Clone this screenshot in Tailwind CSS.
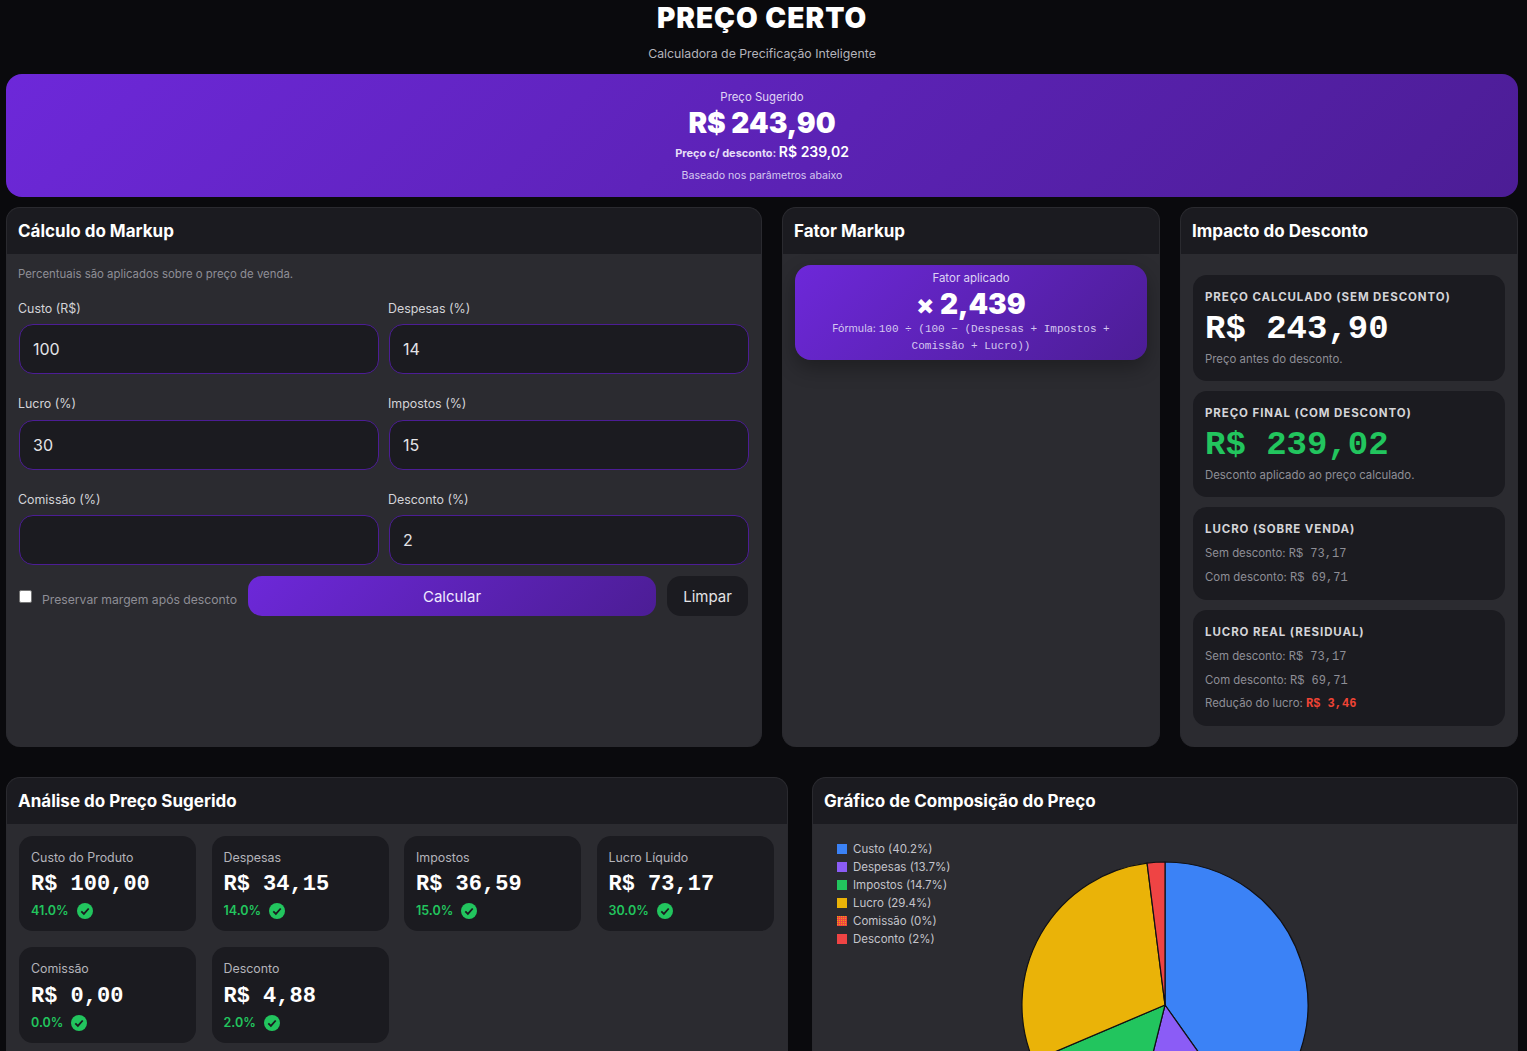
<!DOCTYPE html>
<html lang="pt-BR">
<head>
<meta charset="utf-8">
<title>Preço Certo</title>
<script src="https://cdn.jsdelivr.net/npm/@tailwindcss/browser@4"></script>
</head>
<body class="m-0 h-[1051px] overflow-hidden bg-[#0a0a0d] font-['Inter',sans-serif] text-white">
<div class="w-[1512px] ml-[6px]">
  <header class="h-[74px] text-center">
    <h1 class="m-0 pt-[1px] text-[28px] leading-[34px] font-black tracking-[1px] text-white">PREÇO CERTO</h1>
    <p class="mt-[10px] text-[12.3px] leading-[18px] text-[#b4b4bb]">Calculadora de Precificação Inteligente</p>
  </header>

  <section class="h-[123px] rounded-[16px] bg-[linear-gradient(135deg,#6d28d9,#4c1d95)] pt-[15px] text-center">
    <div class="text-[11.4px] leading-[16px] text-[#e0d6f5]">Preço Sugerido</div>
    <div class="text-[28px] leading-[34px] font-black mt-[1px]">R$ 243,90</div>
    <div class="text-[11px] leading-[18px] font-bold text-[#e6def7] mt-[3px]">Preço c/ desconto: <span class="text-[14px] font-semibold text-white">R$ 239,02</span></div>
    <div class="text-[10.6px] leading-[14px] text-[#d5c8f0] mt-[7px]">Baseado nos parâmetros abaixo</div>
  </section>

  <div class="grid grid-cols-[756px_378px_338px] gap-[20px] mt-[10px]">
    <section class="h-[540px] rounded-[14px] overflow-hidden bg-[#2b2b30] border-t border-x border-[#2a2a2f]">
      <div class="h-[46px] bg-[#1b1b20] px-[11px] pt-[1px] flex items-center"><h2 class="text-[17px] font-bold">Cálculo do Markup</h2></div>
      <div class="px-[11px] pt-[13px]">
        <p class="text-[11.4px] leading-[14px] text-[#8e8e96]">Percentuais são aplicados sobre o preço de venda.</p>
        <div class="grid grid-cols-[360px_360px] gap-x-[10px] mt-[20px]">
          <label class="block h-[95px]"><span class="block text-[12.4px] leading-[16px] text-[#d4d4d8] mb-[7px]">Custo (R$)</span><input value="100" class="ml-px w-[360px] h-[50px] rounded-[14px] border border-[#4c1d95] bg-[#1b1b20] px-[13px] text-[16px] text-[#e4e4e7] outline-none"></label>
          <label class="block h-[95px]"><span class="block text-[12.4px] leading-[16px] text-[#d4d4d8] mb-[7px]">Despesas (%)</span><input value="14" class="ml-px w-[360px] h-[50px] rounded-[14px] border border-[#4c1d95] bg-[#1b1b20] px-[13px] text-[16px] text-[#e4e4e7] outline-none"></label>
          <label class="block h-[96px]"><span class="block text-[12.4px] leading-[16px] text-[#d4d4d8] mb-[8px]">Lucro (%)</span><input value="30" class="ml-px w-[360px] h-[50px] rounded-[14px] border border-[#4c1d95] bg-[#1b1b20] px-[13px] text-[16px] text-[#e4e4e7] outline-none"></label>
          <label class="block h-[96px]"><span class="block text-[12.4px] leading-[16px] text-[#d4d4d8] mb-[8px]">Impostos (%)</span><input value="15" class="ml-px w-[360px] h-[50px] rounded-[14px] border border-[#4c1d95] bg-[#1b1b20] px-[13px] text-[16px] text-[#e4e4e7] outline-none"></label>
          <label class="block h-[84px]"><span class="block text-[12.4px] leading-[16px] text-[#d4d4d8] mb-[7px]">Comissão (%)</span><input value="" class="ml-px w-[360px] h-[50px] rounded-[14px] border border-[#4c1d95] bg-[#1b1b20] px-[13px] text-[16px] text-[#e4e4e7] outline-none"></label>
          <label class="block h-[84px]"><span class="block text-[12.4px] leading-[16px] text-[#d4d4d8] mb-[7px]">Desconto (%)</span><input value="2" class="ml-px w-[360px] h-[50px] rounded-[14px] border border-[#4c1d95] bg-[#1b1b20] px-[13px] text-[16px] text-[#e4e4e7] outline-none"></label>
        </div>
        <div class="flex items-center h-[40px]">
          <span class="ml-[1px] w-[13px] h-[13px] rounded-[2px] bg-white border border-[#767676] mt-[1px]"></span>
          <span class="ml-[10px] w-[206px] text-[12.2px] text-[#8e8e96] mt-[8px]">Preservar margem após desconto</span>
          <button class="w-[408px] h-[40px] rounded-[14px] bg-[linear-gradient(135deg,#6d28d9,#4c1d95)] pt-[2px] text-[15px] text-[#f0eaff]">Calcular</button>
          <button class="ml-[11px] w-[81px] h-[40px] rounded-[14px] bg-[#1b1b20] pt-[2px] text-[15px] text-[#e4e4e7]">Limpar</button>
        </div>
      </div>
    </section>

    <section class="h-[540px] rounded-[14px] overflow-hidden bg-[#2b2b30] border-t border-x border-[#2a2a2f]">
      <div class="h-[46px] bg-[#1b1b20] px-[11px] pt-[1px] flex items-center"><h2 class="text-[17px] font-bold">Fator Markup</h2></div>
      <div class="px-[12px] pt-[11px]">
        <div class="h-[95px] rounded-[16px] bg-[linear-gradient(135deg,#6d28d9,#4c1d95)] shadow-[0_8px_20px_rgba(0,0,0,0.3)] text-center pt-[5px] px-[30px]">
          <div class="text-[11.5px] leading-[16px] text-[#ddd2f4]">Fator aplicado</div>
          <div class="text-[28px] leading-[34px] font-black mt-[1px]"><span class="text-[26px]">×</span> 2,439</div>
          <div class="text-[10.6px] leading-[16.5px] text-[#d5c8f0] -mt-[1px]">Fórmula: <span class="font-['Liberation_Mono',monospace] text-[11px]">100 ÷ (100 − (Despesas + Impostos + Comissão + Lucro))</span></div>
        </div>
      </div>
    </section>

    <section class="h-[540px] rounded-[14px] overflow-hidden bg-[#2b2b30] border-t border-x border-[#2a2a2f]">
      <div class="h-[46px] bg-[#1b1b20] px-[11px] pt-[1px] flex items-center"><h2 class="text-[17px] font-bold">Impacto do Desconto</h2></div>
      <div class="px-[12px] pt-[21px] flex flex-col gap-[10px]">
        <div class="h-[106px] rounded-[14px] bg-[#1b1b20] px-[12px] pt-[14px]">
          <div class="text-[11.5px] leading-[16px] font-bold tracking-[0.9px] text-[#d4d4d8]">PREÇO CALCULADO (SEM DESCONTO)</div>
          <div class="font-['Liberation_Mono',monospace] text-[34px] leading-[38px] font-bold mt-[5px]">R$ 243,90</div>
          <div class="text-[11.4px] leading-[16px] text-[#8e8e96] mt-[3px]">Preço antes do desconto.</div>
        </div>
        <div class="h-[106px] rounded-[14px] bg-[#1b1b20] px-[12px] pt-[14px]">
          <div class="text-[11.5px] leading-[16px] font-bold tracking-[0.9px] text-[#d4d4d8]">PREÇO FINAL (COM DESCONTO)</div>
          <div class="font-['Liberation_Mono',monospace] text-[34px] leading-[38px] font-bold text-[#22c55e] mt-[5px]">R$ 239,02</div>
          <div class="text-[11.4px] leading-[16px] text-[#8e8e96] mt-[3px]">Desconto aplicado ao preço calculado.</div>
        </div>
        <div class="h-[93px] rounded-[14px] bg-[#1b1b20] px-[12px] pt-[14px]">
          <div class="text-[11.5px] leading-[16px] font-bold tracking-[0.9px] text-[#d4d4d8]">LUCRO (SOBRE VENDA)</div>
          <div class="text-[11.4px] leading-[16px] text-[#8e8e96] mt-[8px]">Sem desconto: <span class="font-['Liberation_Mono',monospace] text-[12px]">R$ 73,17</span></div>
          <div class="text-[11.4px] leading-[16px] text-[#8e8e96] mt-[7px]">Com desconto: <span class="font-['Liberation_Mono',monospace] text-[12px]">R$ 69,71</span></div>
        </div>
        <div class="h-[116px] rounded-[14px] bg-[#1b1b20] px-[12px] pt-[14px]">
          <div class="text-[11.5px] leading-[16px] font-bold tracking-[0.9px] text-[#d4d4d8]">LUCRO REAL (RESIDUAL)</div>
          <div class="text-[11.4px] leading-[16px] text-[#8e8e96] mt-[8px]">Sem desconto: <span class="font-['Liberation_Mono',monospace] text-[12px]">R$ 73,17</span></div>
          <div class="text-[11.4px] leading-[16px] text-[#8e8e96] mt-[7px]">Com desconto: <span class="font-['Liberation_Mono',monospace] text-[12px]">R$ 69,71</span></div>
          <div class="text-[11.4px] leading-[16px] text-[#8e8e96] mt-[6px]">Redução do lucro: <span class="font-['Liberation_Mono',monospace] text-[12px] font-bold text-[#ef4435]">R$ 3,46</span></div>
        </div>
      </div>
    </section>
  </div>

  <div class="grid grid-cols-[782px_706px] gap-[24px] mt-[30px]">
    <section class="h-[300px] rounded-t-[14px] overflow-hidden bg-[#2b2b30] border-t border-x border-[#2a2a2f]">
      <div class="h-[46px] bg-[#1b1b20] px-[11px] pt-[1px] flex items-center"><h2 class="text-[17px] font-bold">Análise do Preço Sugerido</h2></div>
      <div class="grid grid-cols-[177px_177px_177px_177px] gap-x-[15.5px] gap-y-[16px] pl-[12px] pt-[12px]">
        <div class="h-[95px] rounded-[14px] bg-[#1b1b20] px-[12px] pt-[14px]">
          <div class="text-[12.4px] leading-[16px] text-[#b4b4bb]">Custo do Produto</div>
          <div class="font-['Liberation_Mono',monospace] text-[22px] leading-[26px] font-bold mt-[6px]">R$ 100,00</div>
          <div class="flex items-center gap-[8px] text-[12.5px] font-semibold text-[#22c55e] mt-[5px] h-[16px]">41.0%<svg class="w-[16px] h-[16px]" viewBox="0 0 16 16"><circle cx="8" cy="8" r="8" fill="#22c55e"/><path d="M4.3 8.3l2.6 2.6 4.8-5.4" fill="none" stroke="#1b1b20" stroke-width="1.8"/></svg></div>
        </div>
        <div class="h-[95px] rounded-[14px] bg-[#1b1b20] px-[12px] pt-[14px]">
          <div class="text-[12.4px] leading-[16px] text-[#b4b4bb]">Despesas</div>
          <div class="font-['Liberation_Mono',monospace] text-[22px] leading-[26px] font-bold mt-[6px]">R$ 34,15</div>
          <div class="flex items-center gap-[8px] text-[12.5px] font-semibold text-[#22c55e] mt-[5px] h-[16px]">14.0%<svg class="w-[16px] h-[16px]" viewBox="0 0 16 16"><circle cx="8" cy="8" r="8" fill="#22c55e"/><path d="M4.3 8.3l2.6 2.6 4.8-5.4" fill="none" stroke="#1b1b20" stroke-width="1.8"/></svg></div>
        </div>
        <div class="h-[95px] rounded-[14px] bg-[#1b1b20] px-[12px] pt-[14px]">
          <div class="text-[12.4px] leading-[16px] text-[#b4b4bb]">Impostos</div>
          <div class="font-['Liberation_Mono',monospace] text-[22px] leading-[26px] font-bold mt-[6px]">R$ 36,59</div>
          <div class="flex items-center gap-[8px] text-[12.5px] font-semibold text-[#22c55e] mt-[5px] h-[16px]">15.0%<svg class="w-[16px] h-[16px]" viewBox="0 0 16 16"><circle cx="8" cy="8" r="8" fill="#22c55e"/><path d="M4.3 8.3l2.6 2.6 4.8-5.4" fill="none" stroke="#1b1b20" stroke-width="1.8"/></svg></div>
        </div>
        <div class="h-[95px] rounded-[14px] bg-[#1b1b20] px-[12px] pt-[14px]">
          <div class="text-[12.4px] leading-[16px] text-[#b4b4bb]">Lucro Líquido</div>
          <div class="font-['Liberation_Mono',monospace] text-[22px] leading-[26px] font-bold mt-[6px]">R$ 73,17</div>
          <div class="flex items-center gap-[8px] text-[12.5px] font-semibold text-[#22c55e] mt-[5px] h-[16px]">30.0%<svg class="w-[16px] h-[16px]" viewBox="0 0 16 16"><circle cx="8" cy="8" r="8" fill="#22c55e"/><path d="M4.3 8.3l2.6 2.6 4.8-5.4" fill="none" stroke="#1b1b20" stroke-width="1.8"/></svg></div>
        </div>
        <div class="h-[96px] rounded-[14px] bg-[#1b1b20] px-[12px] pt-[14px]">
          <div class="text-[12.4px] leading-[16px] text-[#b4b4bb]">Comissão</div>
          <div class="font-['Liberation_Mono',monospace] text-[22px] leading-[26px] font-bold mt-[7px]">R$ 0,00</div>
          <div class="flex items-center gap-[8px] text-[12.5px] font-semibold text-[#22c55e] mt-[5px] h-[16px]">0.0%<svg class="w-[16px] h-[16px]" viewBox="0 0 16 16"><circle cx="8" cy="8" r="8" fill="#22c55e"/><path d="M4.3 8.3l2.6 2.6 4.8-5.4" fill="none" stroke="#1b1b20" stroke-width="1.8"/></svg></div>
        </div>
        <div class="h-[96px] rounded-[14px] bg-[#1b1b20] px-[12px] pt-[14px]">
          <div class="text-[12.4px] leading-[16px] text-[#b4b4bb]">Desconto</div>
          <div class="font-['Liberation_Mono',monospace] text-[22px] leading-[26px] font-bold mt-[7px]">R$ 4,88</div>
          <div class="flex items-center gap-[8px] text-[12.5px] font-semibold text-[#22c55e] mt-[5px] h-[16px]">2.0%<svg class="w-[16px] h-[16px]" viewBox="0 0 16 16"><circle cx="8" cy="8" r="8" fill="#22c55e"/><path d="M4.3 8.3l2.6 2.6 4.8-5.4" fill="none" stroke="#1b1b20" stroke-width="1.8"/></svg></div>
        </div>
      </div>
    </section>

    <section class="h-[300px] rounded-t-[14px] overflow-hidden bg-[#2b2b30] border-t border-x border-[#2a2a2f]">
      <div class="h-[46px] bg-[#1b1b20] px-[11px] pt-[1px] flex items-center"><h2 class="text-[17px] font-bold">Gráfico de Composição do Preço</h2></div>
      <div class="flex pl-[24px] pt-[16px]">
        <ul class="w-[161px] shrink-0 text-[11.5px] leading-[18px] text-[#c4c4cb]">
          <li class="flex items-center gap-[6px]"><span class="w-[10px] h-[10px] bg-[#3b82f6]"></span>Custo (40.2%)</li>
          <li class="flex items-center gap-[6px]"><span class="w-[10px] h-[10px] bg-[#8b5cf6]"></span>Despesas (13.7%)</li>
          <li class="flex items-center gap-[6px]"><span class="w-[10px] h-[10px] bg-[#22c55e]"></span>Impostos (14.7%)</li>
          <li class="flex items-center gap-[6px]"><span class="w-[10px] h-[10px] bg-[#eab308]"></span>Lucro (29.4%)</li>
          <li class="flex items-center gap-[6px]"><svg class="w-[10px] h-[10px]" viewBox="0 0 10 10"><defs><pattern id="dither" width="2" height="2" patternUnits="userSpaceOnUse"><rect width="2" height="2" fill="#ef4444"/><rect width="1" height="1" fill="#f59e0b"/></pattern></defs><rect width="10" height="10" fill="url(#dither)"/></svg>Comissão (0%)</li>
          <li class="flex items-center gap-[6px]"><span class="w-[10px] h-[10px] bg-[#ef4444]"></span>Desconto (2%)</li>
        </ul>
        <svg class="w-[288px] h-[288px] mt-[21px] ml-[23px] shrink-0" viewBox="-143 -143 286 286">
          <g stroke="#111114" stroke-width="1.2" stroke-linejoin="round">
            <path d="M0 0L0 -142A142 142 0 0 1 82 115.9Z" fill="#3b82f6"/>
            <path d="M0 0L82 115.9A142 142 0 0 1 -34.5 137.8Z" fill="#8b5cf6"/>
            <path d="M0 0L-34.5 137.8A142 142 0 0 1 -130.7 55.6Z" fill="#22c55e"/>
            <path d="M0 0L-130.7 55.6A142 142 0 0 1 -17.8 -140.9Z" fill="#eab308"/>
            <path d="M0 0L-17.8 -140.9A142 142 0 0 1 0 -142Z" fill="#ef4444"/>
          </g>
        </svg>
      </div>
    </section>
  </div>
</div>
</body>
</html>
